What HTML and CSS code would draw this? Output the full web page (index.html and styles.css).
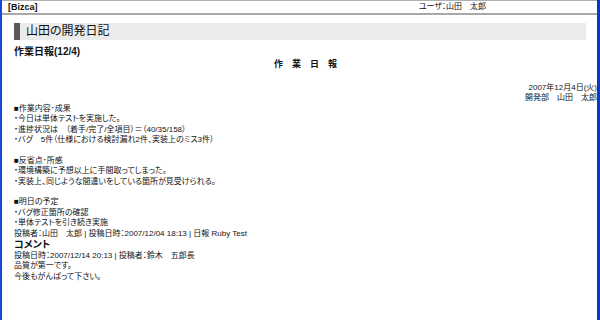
FILE: index.html
```html
<!DOCTYPE html>
<html lang="ja">
<head>
    <meta charset="UTF-8">
    <title>山田の開発日記 - Bizca</title>
    <link rel="stylesheet" href="styles.css">
</head>
<body>
    <div class="frame">
        <div class="topbar">
            <span class="brand">[Bizca]</span>
            <span class="user">ユーザ：山田　太郎</span>
        </div>

        <div class="content">
            <h1 class="blog-title">山田の開発日記</h1>

            <h2 class="entry-title">作業日報(12/4)</h2>
            <div class="report-head">作　業　日　報</div>

            <div class="report-sign">
                <div>2007年12月4日(火)</div>
                <div>開発部　山田　太郎</div>
            </div>

            <div class="report-body">
                <p>■作業内容･成果<br>
                ・今日は単体テストを実施した。<br>
                ・進捗状況は　（着手/完了/全項目）＝（40/35/158）<br>
                ・バグ　5件（仕様における検討漏れ2件、実装上のミス3件）</p>

                <p>■反省点･所感<br>
                ・環境構築に予想以上に手間取ってしまった。<br>
                ・実装上、同じような間違いをしている箇所が見受けられる。</p>

                <p>■明日の予定<br>
                ・バグ修正箇所の確認<br>
                ・単体テストを引き続き実施</p>
            </div>

            <div class="entry-meta">投稿者：山田　太郎 | 投稿日時：2007/12/04 18:13 | 日報 Ruby Test</div>

            <!-- comments -->
            <h3 class="comment-title">コメント</h3>
            <div class="comment">
                <div class="comment-meta">投稿日時：2007/12/14 20:13 | 投稿者：鈴木　五郎長</div>
                <div class="comment-text">品質が第一です。<br>今後もがんばって下さい。</div>
            </div>
        </div>
    </div>
</body>
</html>
```

FILE: styles.css
```css
* {
    box-sizing: border-box;
    margin: 0;
    padding: 0;
}

body {
    font-family: 'Liberation Sans', 'Noto Sans CJK JP', sans-serif;
    font-feature-settings: "palt";
    font-size: 8px;
    line-height: 10.4px;
    color: #111;
    background-color: #fff;
    overflow: hidden;
}

.frame {
    height: 320px;
    border-left: 2px solid #1a46d8;
    border-right: 3px solid #0a36cc;
    overflow: hidden;
}

.topbar {
    display: flex;
    justify-content: space-between;
    align-items: center;
    height: 15px;
    padding-left: 6px;
    border-top: 1px solid #b0b0b0;
    border-bottom: 2px solid #a8a8a8;
}

.brand {
    font-weight: bold;
    font-size: 9px;
}

.user {
    margin-right: 111px;
}

.content {
    padding-left: 12px;
}

.blog-title {
    margin: 8px 11px 0 0;
    height: 17px;
    padding-left: 6px;
    background-color: #ebebeb;
    border-left: 6px solid #5a5a5a;
    font-size: 12px;
    font-weight: normal;
    line-height: 17px;
    color: #111;
}

.entry-title {
    margin-top: 5px;
    font-size: 10px;
    line-height: 13px;
    font-weight: bold;
}

.report-head {
    text-align: center;
    font-size: 9px;
    line-height: 12px;
    font-weight: bold;
}

.report-sign {
    margin-top: 13px;
    text-align: right;
}

.report-body p {
    margin-bottom: 10.4px;
}

.report-body p:last-child {
    margin-bottom: 0;
}

.comment-title {
    font-size: 10px;
    line-height: 11px;
    font-weight: bold;
}

.comment-meta {
    margin-top: 1px;
}
```
